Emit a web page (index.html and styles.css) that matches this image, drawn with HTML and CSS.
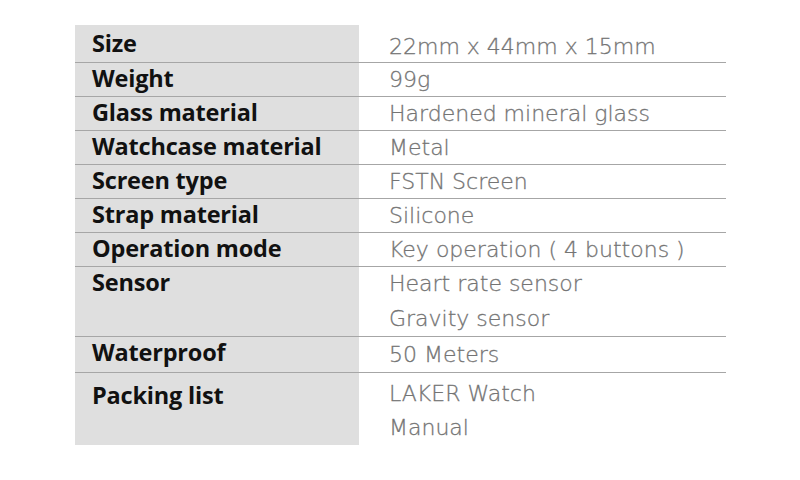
FILE: index.html
```html
<!DOCTYPE html>
<html>
<head>
<meta charset="utf-8">
<link rel="stylesheet" href="styles.css">
</head>
<body>
<div class="specs">
  <div class="row first"><div class="label">Size</div><div class="value">22mm x 44mm x 15mm</div></div>
  <div class="row"><div class="label">Weight</div><div class="value">99g</div></div>
  <div class="row"><div class="label">Glass material</div><div class="value">Hardened mineral glass</div></div>
  <div class="row"><div class="label">Watchcase material</div><div class="value">Metal</div></div>
  <div class="row"><div class="label">Screen type</div><div class="value">FSTN Screen</div></div>
  <div class="row"><div class="label">Strap material</div><div class="value">Silicone</div></div>
  <div class="row"><div class="label">Operation mode</div><div class="value">Key operation ( 4 buttons )</div></div>
  <div class="row multi"><div class="label">Sensor</div><div class="value">Heart rate sensor<br>Gravity sensor</div></div>
  <div class="row tall"><div class="label">Waterproof</div><div class="value">50 Meters</div></div>
  <div class="row multi last"><div class="label">Packing list</div><div class="value">LAKER Watch<br>Manual</div></div>
</div>
</body>
</html>
```
FILE: styles.css
```css
html, body {
  margin: 0;
  padding: 0;
  background: #ffffff;
}
body {
  width: 800px;
  height: 480px;
  overflow: hidden;
}
.specs {
  margin: 25px 0 0 75px;
  width: 651px;
}
.row {
  display: grid;
  grid-template-columns: 284px 1fr;
  border-bottom: 1px solid #a6a6a6;
}
.row.last {
  border-bottom: none;
}
.label {
  background: #dfdfdf;
  padding-left: 17px;
  font-family: "Open Sans", "Liberation Sans", sans-serif;
  font-weight: 700;
  font-size: 23.5px;
  letter-spacing: -0.2px;
  line-height: 31px;
  color: #111111;
}
.value {
  padding-left: 30px;
  font-family: "DejaVu Sans", "Open Sans", sans-serif;
  font-weight: 200;
  font-size: 22px;
  line-height: 32px;
  padding-top: 1px;
  color: #747474;
  -webkit-text-stroke: 0.3px #747474;
}
.row.first .value {
  padding-top: 7px;
  line-height: 30px;
}
.row.first .label {
  padding-top: 3px;
}
.row.multi .value {
  padding-top: 0;
  line-height: 34.5px;
}
.row.tall .value {
  padding-top: 0;
  line-height: 35px;
}
.row.last .value {
  line-height: 34px;
  padding-top: 4px;
}
.row.last .label {
  padding-top: 7px;
}
```
